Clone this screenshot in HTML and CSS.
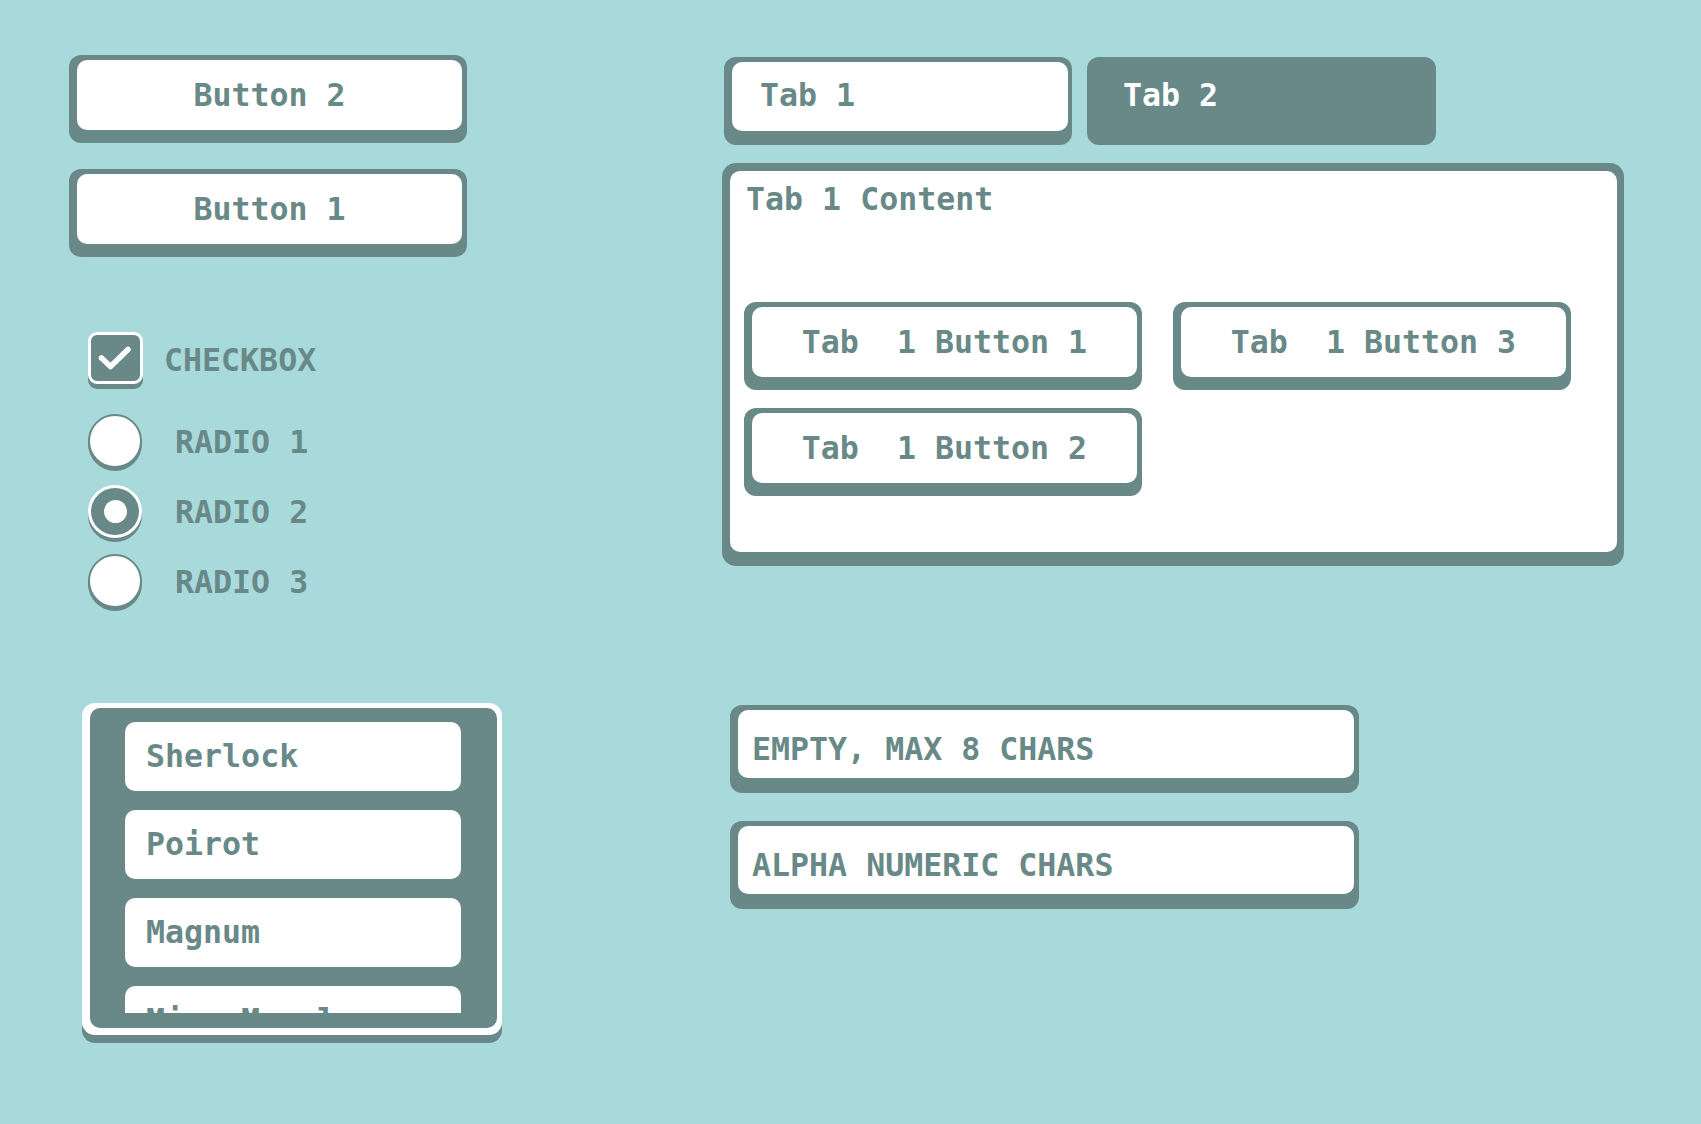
FILE: index.html
```html
<!DOCTYPE html>
<html lang="en">
<head>
<meta charset="utf-8">
<title>Widgets</title>
<link rel="stylesheet" href="styles.css">
</head>
<body>
<div class="page">
  <div class="col-left">
    <div class="btn"><div class="btn-face">Button 2</div></div>
    <div class="btn btn-next"><div class="btn-face">Button 1</div></div>

    <div class="check-row">
      <div class="checkbox">
        <svg class="check-icon" width="49" height="46" viewBox="0 0 49 46">
          <path d="M10.5 23 L19.5 31.5 L37 14.5" fill="none" stroke="#ffffff" stroke-width="5.5" stroke-linecap="round" stroke-linejoin="round"/>
        </svg>
      </div>
      <span class="check-label">CHECKBOX</span>
    </div>

    <div class="radio-group">
      <div class="radio-row"><span class="radio"></span><span class="radio-label">RADIO 1</span></div>
      <div class="radio-row"><span class="radio radio-on"><span class="radio-dot"></span></span><span class="radio-label">RADIO 2</span></div>
      <div class="radio-row"><span class="radio"></span><span class="radio-label">RADIO 3</span></div>
    </div>

    <div class="listbox">
      <div class="listbox-inner">
        <div class="listbox-view">
          <div class="item">Sherlock</div>
          <div class="item">Poirot</div>
          <div class="item">Magnum</div>
          <div class="item">Miss Marple</div>
        </div>
      </div>
    </div>
  </div>

  <div class="col-right">
    <div class="tabs">
      <div class="tab tab-active"><div class="tab-face">Tab 1</div></div>
      <div class="tab tab-inactive"><div class="tab-face">Tab 2</div></div>
    </div>

    <div class="panel">
      <div class="panel-face">
        <div class="panel-title">Tab 1 Content</div>
        <div class="panel-grid">
          <div class="btn"><div class="btn-face keep">Tab  1 Button 1</div></div>
          <div class="btn"><div class="btn-face keep">Tab  1 Button 3</div></div>
          <div class="btn"><div class="btn-face keep">Tab  1 Button 2</div></div>
        </div>
      </div>
    </div>

    <div class="text-input first-input"><div class="input-face">EMPTY, MAX 8 CHARS</div></div>
    <div class="text-input next-input"><div class="input-face">ALPHA NUMERIC CHARS</div></div>
  </div>
</div>
</body>
</html>
```
FILE: styles.css
```css
* {
  box-sizing: border-box;
}

html, body {
  margin: 0;
  padding: 0;
}

body {
  background: #a8dadc;
  font-family: "DejaVu Sans Mono", "Liberation Mono", monospace;
  font-weight: bold;
  font-size: 31.6px;
  color: #688987;
  overflow: hidden;
}

.page {
  display: flex;
  align-items: flex-start;
  padding: 55px 0 0 69px;
  min-height: 100vh;
}

/* ---------- left column ---------- */
.col-left {
  width: 433px;
  display: flex;
  flex-direction: column;
  align-items: flex-start;
}

.btn {
  width: 398px;
  height: 88px;
  background: #688987;
  border-radius: 12px;
  padding: 5px 5px 13px 8px;
}

.btn-next {
  margin-top: 26px;
}

.btn-face {
  height: 70px;
  background: #ffffff;
  border-radius: 10px;
  text-align: center;
  line-height: 70px;
}

.keep {
  white-space: pre;
}

.check-row {
  display: flex;
  align-items: center;
  height: 52px;
  margin: 75px 0 0 19px;
}

.checkbox {
  width: 55px;
  height: 52px;
  background: #688987;
  border: 3px solid #ffffff;
  border-radius: 9px;
  box-shadow: 0 5px 0 #688987;
}

.check-icon {
  display: block;
}

.check-label {
  margin: 5px 0 0 21px;
  line-height: 37px;
}

.radio-group {
  display: flex;
  flex-direction: column;
  margin: 30px 0 0 19px;
}

.radio-row {
  display: flex;
  align-items: flex-start;
  height: 70px;
}

.radio {
  flex: none;
  width: 54px;
  height: 54px;
  border-radius: 50%;
  background: #ffffff;
  border: 2px solid #688987;
  box-shadow: 0 3px 0 #688987;
}

.radio-on {
  margin-top: 1px;
  width: 54px;
  height: 53px;
  background: #688987;
  border: 3px solid #ffffff;
  box-shadow: 0 4px 0 #688987;
  display: flex;
  align-items: center;
  justify-content: center;
}

.radio-dot {
  width: 23px;
  height: 23px;
  border-radius: 50%;
  background: #ffffff;
}

.radio-label {
  margin-left: 33px;
  line-height: 57px;
}

.listbox {
  width: 420px;
  height: 332px;
  margin: 79px 0 0 13px;
  background: #ffffff;
  border-radius: 13px;
  padding: 5px 5px 7px 8px;
  box-shadow: 0 8px 0 #688987;
}

.listbox-inner {
  height: 320px;
  background: #688987;
  border-radius: 10px;
  padding: 14px 36px 15px 35px;
}

.listbox-view {
  height: 291px;
  overflow: hidden;
  display: flex;
  flex-direction: column;
  gap: 19px;
}

.item {
  flex: none;
  height: 69px;
  background: #ffffff;
  border-radius: 10px;
  padding-left: 21px;
  line-height: 69px;
  white-space: nowrap;
}

/* ---------- right column ---------- */
.col-right {
  margin-left: 220px;
  width: 902px;
  display: flex;
  flex-direction: column;
  align-items: flex-start;
}

.tabs {
  display: flex;
  gap: 15px;
  margin: 2px 0 0 2px;
}

.tab {
  width: 348px;
  height: 88px;
  background: #688987;
  border-radius: 12px;
  padding: 5px 4px 14px 8px;
}

.tab-face {
  height: 69px;
  border-radius: 10px;
  padding-left: 28px;
  line-height: 66px;
}

.tab-active .tab-face {
  background: #ffffff;
}

.tab-inactive {
  width: 349px;
  color: #ffffff;
}

.panel {
  margin-top: 18px;
  width: 902px;
  height: 403px;
  background: #688987;
  border-radius: 14px;
  padding: 8px 7px 14px 8px;
}

.panel-face {
  height: 381px;
  background: #ffffff;
  border-radius: 10px;
  padding: 10px 0 0 14px;
}

.panel-title {
  margin-left: 2px;
  line-height: 37px;
}

.panel-grid {
  margin-top: 84px;
  display: grid;
  grid-template-columns: 398px 398px;
  column-gap: 31px;
  row-gap: 18px;
}

.text-input {
  width: 629px;
  height: 88px;
  margin-left: 8px;
  background: #688987;
  border-radius: 12px;
  padding: 5px 5px 15px 8px;
}

.first-input {
  margin-top: 139px;
}

.next-input {
  margin-top: 28px;
}

.input-face {
  height: 68px;
  background: #ffffff;
  border-radius: 10px;
  padding: 21px 0 0 14px;
  line-height: 37px;
  white-space: nowrap;
}
```
